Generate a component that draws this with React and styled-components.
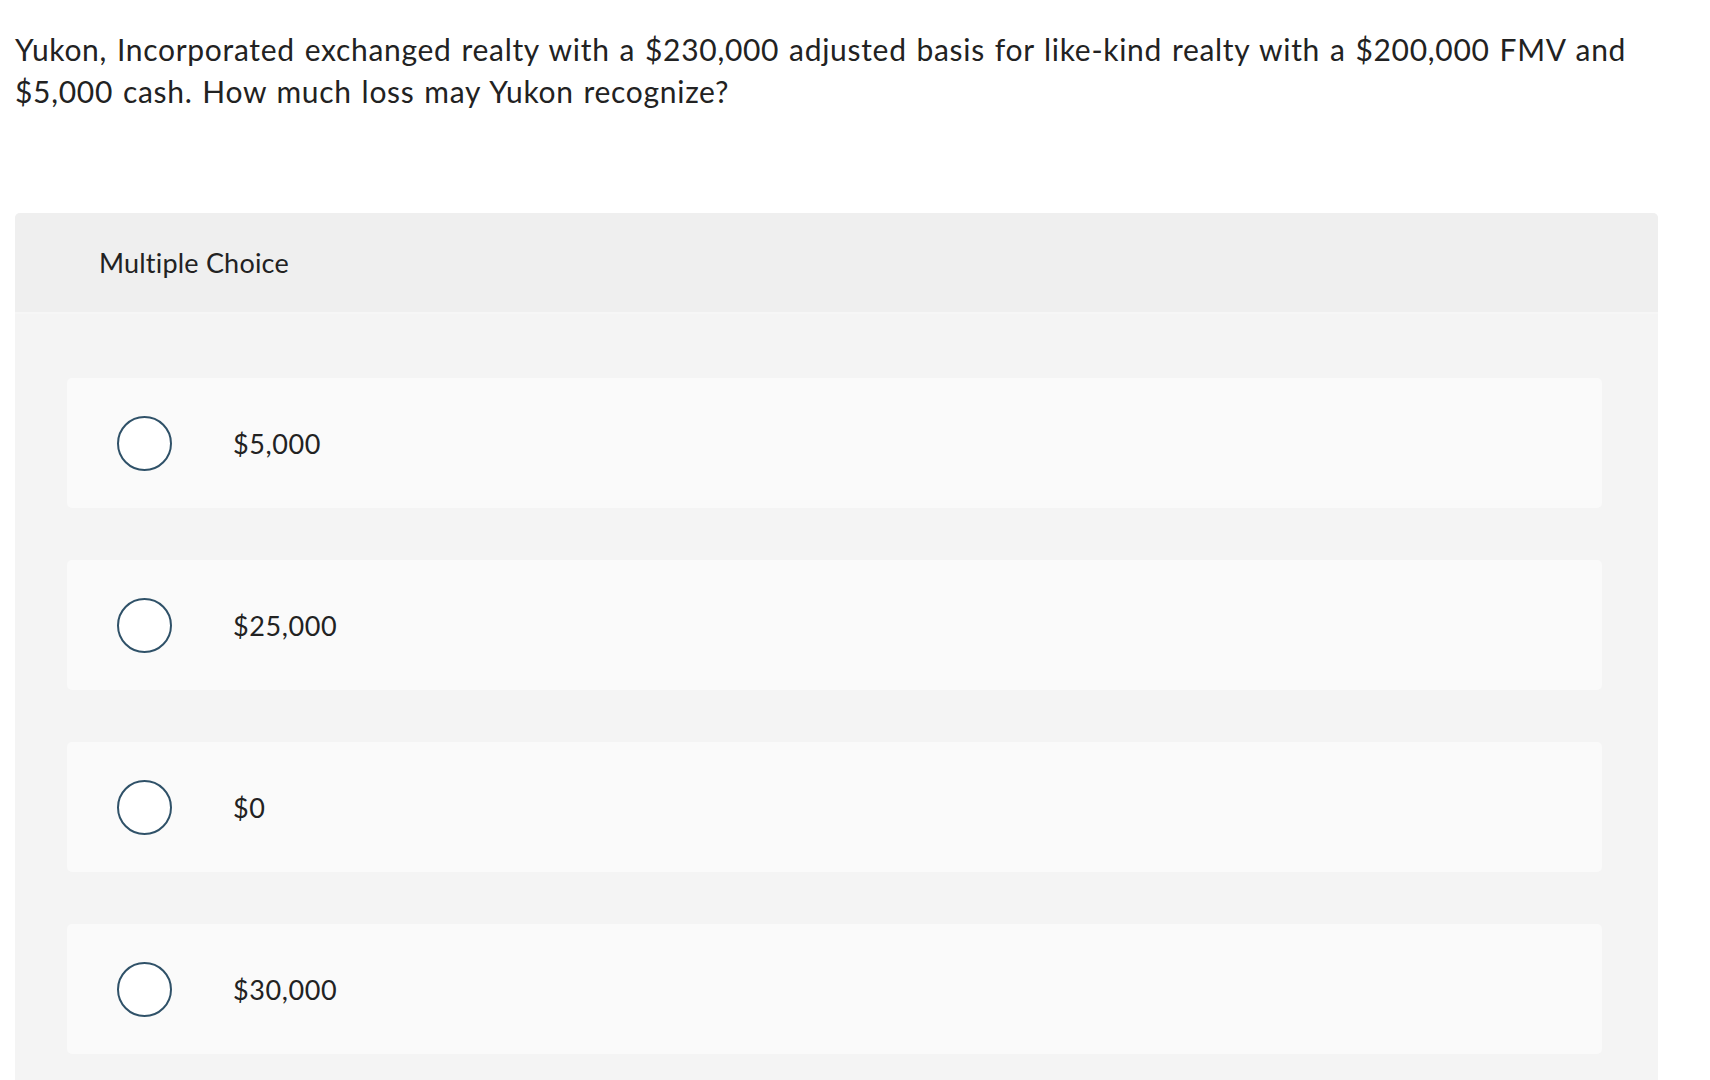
import React from "react";
import styled, { createGlobalStyle } from "styled-components";

const GlobalStyle = createGlobalStyle`
  html, body {
    margin: 0;
    padding: 0;
    background: #ffffff;
  }
  body {
    font-family: Lato, "Open Sans", Arial, sans-serif;
    color: #222222;
  }
`;

const Page = styled.div`
  width: 1710px;
  height: 1080px;
  overflow: hidden;
  padding: 28px 52px 0 15px;
  box-sizing: border-box;
`;

const Question = styled.p`
  margin: 0;
  font-size: 30px;
  line-height: 42px;
  letter-spacing: 0.7px;
  word-spacing: 1.5px;
  color: #222222;
  width: 1643px;
`;

const Card = styled.section`
  margin-top: 101px;
  width: 1643px;
  border-radius: 5px 5px 0 0;
  overflow: hidden;
  background: #f4f4f4;
`;

const CardHeader = styled.header`
  height: 101px;
  display: flex;
  align-items: center;
  padding-left: 84px;
  background: #efefef;
  border-bottom: 2px solid #f6f6f6;
  box-sizing: border-box;
  font-size: 27px;
  letter-spacing: 0.2px;
  color: #222222;
`;

const Options = styled.div`
  display: flex;
  flex-direction: column;
  gap: 52px;
  padding: 64px 56px 40px 52px;
`;

const Option = styled.label`
  height: 130px;
  display: flex;
  align-items: center;
  padding-left: 50px;
  background: #fafafa;
  border-radius: 5px;
  cursor: pointer;
`;

const Radio = styled.span`
  width: 55px;
  height: 55px;
  box-sizing: border-box;
  border-radius: 50%;
  border: 2px solid #2f5168;
  background: #ffffff;
  flex-shrink: 0;
`;

const OptionText = styled.span`
  margin-left: 61px;
  font-size: 27px;
  letter-spacing: 0.6px;
  color: #222222;
`;

const choices = ["$5,000", "$25,000", "$0", "$30,000"];

export default function App() {
  return (
    <>
      <GlobalStyle />
      <Page>
        <Question>
          Yukon, Incorporated exchanged realty with a $230,000 adjusted basis for like-kind realty with a $200,000 FMV and $5,000 cash. How much loss may Yukon recognize?
        </Question>
        <Card>
          <CardHeader>Multiple Choice</CardHeader>
          <Options>
            {choices.map((c) => (
              <Option key={c}>
                <Radio />
                <OptionText>{c}</OptionText>
              </Option>
            ))}
          </Options>
        </Card>
      </Page>
    </>
  );
}
